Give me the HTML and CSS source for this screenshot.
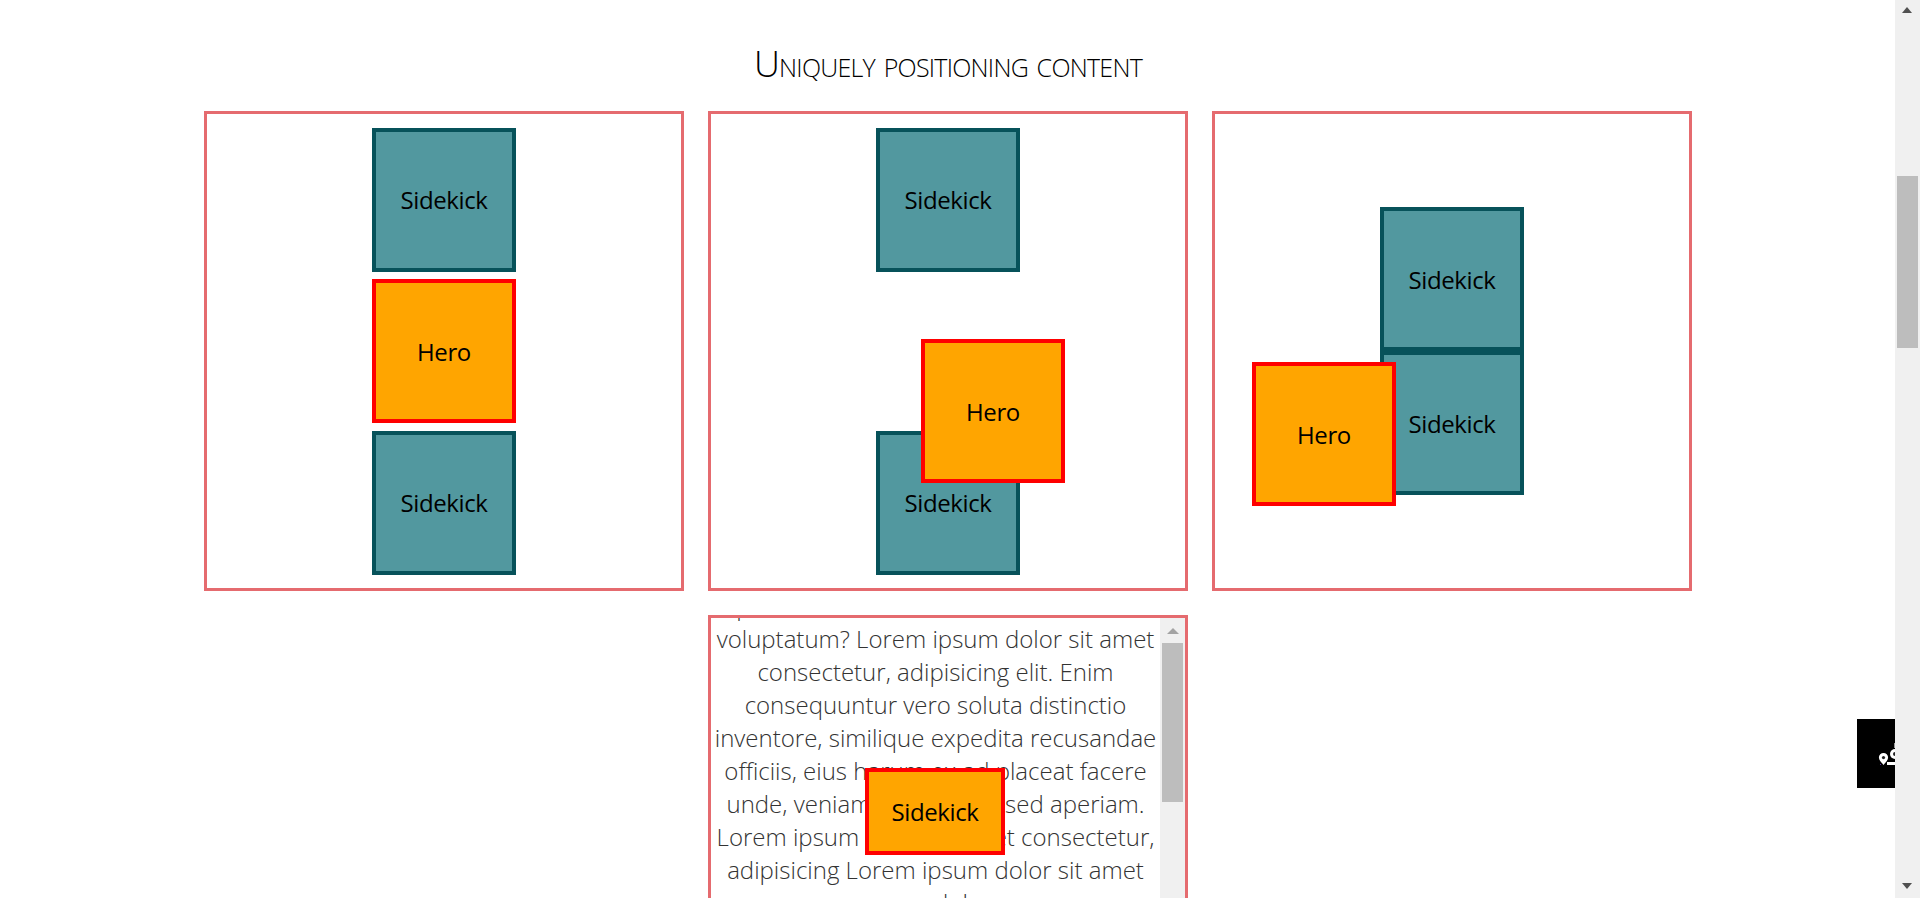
FILE: index.html
```html
<!DOCTYPE html>
<html lang="en">
  <head>
    <meta charset="UTF-8" />
    <meta name="viewport" content="width=device-width, initial-scale=1.0" />
    <title>Uniquely positioning content</title>
    <link rel="stylesheet" href="styles.css">
  </head>
  <body>
    <div class="page">
      <main class="content">
        <h2 class="title">Uniquely positioning content</h2>
        <div class="grid">
          <div class="frame">
            <div class="box sidekick">Sidekick</div>
            <div class="box hero">Hero</div>
            <div class="box sidekick">Sidekick</div>
          </div>

          <div class="frame">
            <div class="box sidekick">Sidekick</div>
            <div class="box hero hero-relative">Hero</div>
            <div class="box sidekick">Sidekick</div>
          </div>

          <div class="frame frame-tight">
            <div class="box hero hero-absolute">Hero</div>
            <div class="box sidekick">Sidekick</div>
            <div class="box sidekick">Sidekick</div>
          </div>

          <div class="frame frame-text">
            <div class="scroll-area">
              <p class="lorem">
                Aperiam in, iste dolores autem nostrum voluptatum? Lorem ipsum
                dolor sit amet consectetur, adipisicing elit. Enim consequuntur
                vero soluta distinctio inventore, similique expedita recusandae
                officiis, eius harum ex ad placeat facere unde, veniam quas nemo
                sed aperiam. Lorem ipsum dolor sit amet consectetur, adipisicing
                Lorem ipsum dolor sit amet nam dolor
              </p>
              <div class="box hero hero-floating">Sidekick</div>
            </div>
            <div class="scrollbar scrollbar-inner">
              <span class="arrow-up"></span>
              <span class="thumb"></span>
            </div>
          </div>
        </div>
      </main>

      <div class="scrollbar scrollbar-page">
        <span class="arrow-up"></span>
        <span class="thumb"></span>
        <span class="arrow-down"></span>
      </div>

      <div class="side-tab">
        <svg width="38" height="69" viewBox="0 0 38 69">
          <path fill="#fff" d="M26.5 34a4.6 4.6 0 0 0-4.6 4.6c0 2.8 3.2 5.6 4.6 7.4 1.4-1.8 4.6-4.6 4.6-7.4a4.6 4.6 0 0 0-4.6-4.6z" />
          <circle cx="26.5" cy="38.6" r="1.6" fill="#222" />
          <circle cx="38" cy="35" r="5" fill="#fff" />
          <circle cx="38" cy="35" r="2" fill="#222" />
          <rect x="30" y="43" width="8" height="3" fill="#fff" />
          <rect x="37" y="24" width="1" height="5" fill="#999" />
          <rect x="23" y="45" width="1" height="1" fill="#5a2ca0" />
        </svg>
      </div>
    </div>
  </body>
</html>
```

FILE: styles.css
```css
html,
body {
  margin: 0;
  height: 100%;
  overflow: hidden;
}
body {
  font-family: "Open Sans", sans-serif;
  color: #000;
  background: #fff;
}
.page {
  position: relative;
  display: flex;
  height: 898px;
  overflow: hidden;
}
.content {
  flex: 1;
  min-width: 0;
  padding-left: 1px;
}
.title {
  margin: 38px 0 22px;
  font-size: 36px;
  line-height: 51px;
  font-weight: 300;
  font-variant: small-caps;
  letter-spacing: -0.75px;
  text-align: center;
}
.grid {
  display: grid;
  grid-template-columns: repeat(3, 480px);
  gap: 24px;
  justify-content: center;
}
.frame {
  position: relative;
  box-sizing: border-box;
  height: 480px;
  border: 3px solid #e56b6f;
  display: flex;
  flex-direction: column;
  align-items: center;
  justify-content: center;
  gap: 7.5px;
}
.frame-tight {
  gap: 0;
}
.frame-text {
  grid-column: 2;
  flex-direction: row;
  align-items: stretch;
  justify-content: flex-start;
  gap: 0;
}
.box {
  box-sizing: border-box;
  width: 144px;
  height: 144px;
  display: flex;
  align-items: center;
  justify-content: center;
  font-size: 24px;
  letter-spacing: -0.4px;
  border: 4px solid;
}
.sidekick {
  background: #52989f;
  border-color: #07525a;
}
.hero {
  background: orange;
  border-color: red;
}
.hero-relative {
  position: relative;
  left: 45px;
  top: 60px;
}
.hero-absolute {
  position: absolute;
  left: 37px;
  bottom: 82px;
}
.scroll-area {
  position: relative;
  flex: 1;
  min-width: 0;
  overflow: hidden;
}
.lorem {
  margin: -29px 0 0;
  font-size: 24px;
  line-height: 33px;
  font-weight: 300;
  text-align: center;
  color: #333;
}
.hero-floating {
  position: absolute;
  left: 154px;
  top: 150px;
  width: 140px;
  height: 87px;
}
.scrollbar {
  position: relative;
  flex: none;
  width: 25px;
  background: #f0f0f0;
}
.thumb {
  position: absolute;
  left: 2px;
  width: 21px;
  background: #bdbdbd;
}
.scrollbar-page .thumb {
  top: 176px;
  height: 172px;
}
.scrollbar-inner .thumb {
  top: 25px;
  height: 159px;
}
.arrow-up,
.arrow-down {
  position: absolute;
  left: 7px;
  width: 0;
  height: 0;
  border-left: 5.5px solid transparent;
  border-right: 5.5px solid transparent;
}
.arrow-up {
  top: 7px;
  border-bottom: 6px solid #505050;
}
.arrow-down {
  bottom: 9px;
  border-top: 6px solid #505050;
}
.scrollbar-inner .arrow-up {
  top: 10px;
  left: 6.5px;
  border-left-width: 6px;
  border-right-width: 6px;
  border-bottom-color: #a3a3a3;
}
.side-tab {
  position: absolute;
  right: 25px;
  top: 719px;
  width: 38px;
  height: 69px;
  background: #000;
}
.side-tab svg {
  display: block;
}
```
